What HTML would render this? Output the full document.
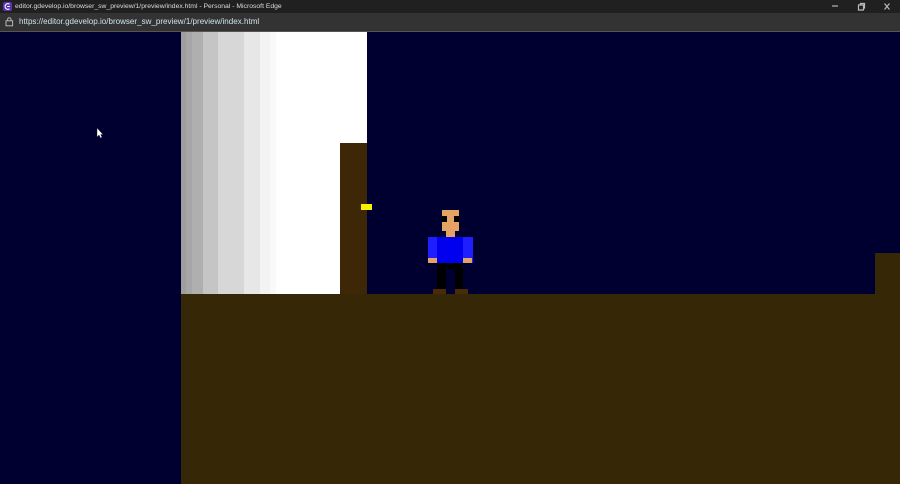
<!DOCTYPE html>
<html lang="en">
<head>
<meta charset="utf-8">
<title>Preview</title>
<style>
html,body{margin:0;padding:0;width:900px;height:484px;overflow:hidden;background:#000030;font-family:"Liberation Sans",sans-serif}
div{position:absolute}
.t{white-space:nowrap;line-height:12px}
</style>
</head>
<body>
<div style="left:0;top:0;width:900px;height:484px;background:#000030;overflow:hidden">

<!-- Title bar -->
<div style="left:0;top:0;width:900px;height:13px;background:#202020"></div>
<div style="left:3px;top:2px;width:9px;height:9px;background:#5a32b4;border-radius:2px"></div>
<svg style="position:absolute;left:3px;top:2px" width="9" height="9" viewBox="0 0 9 9"><path d="M6.5 2.2A2.8 2.8 0 1 0 6.5 6.8M6.8 4.5H4.2" fill="none" stroke="#fff" stroke-width="1.1"/></svg>
<div class="t" style="left:15px;top:1px;color:#dcdcdc;font-size:6.8px">editor.gdevelop.io/browser_sw_preview/1/preview/index.html - Personal - Microsoft Edge</div>
<svg style="position:absolute;left:830px;top:1px" width="66" height="11" viewBox="0 0 66 11" fill="none" stroke="#b8b8b8" stroke-width="1.2">
<path d="M2 5H8"/>
<path d="M28.5 4H33.5V9H28.5ZM30.5 4V2.5H34.5V7H33.5"/>
<path d="M54.5 2.5L59.5 8.5M59.5 2.5L54.5 8.5"/>
</svg>

<!-- Address bar -->
<div style="left:0;top:13px;width:900px;height:18px;background:#333333"></div>
<div style="left:0;top:31px;width:900px;height:1px;background:#555"></div>
<svg style="position:absolute;left:5px;top:17px" width="9" height="10" viewBox="0 0 9 10" fill="none" stroke="#b5b5b5"><rect x="1" y="3.8" width="6.6" height="5"/><path d="M2.6 3.8V2.4A1.7 1.7 0 0 1 6 2.4V3.8"/></svg>
<div class="t" style="left:19px;top:16px;color:#cfe3ee;font-size:8.05px">https://editor.gdevelop.io/browser_sw_preview/1/preview/index.html</div>

<!-- Wall gradient -->
<div style="left:181px;top:32px;width:186px;height:262px;background:#fff"></div>
<div style="left:181px;top:32px;width:5px;height:262px;background:#9e9e9e"></div>
<div style="left:186px;top:32px;width:6px;height:262px;background:#a6a6a6"></div>
<div style="left:192px;top:32px;width:11px;height:262px;background:#afafaf"></div>
<div style="left:203px;top:32px;width:15px;height:262px;background:#c5c5c5"></div>
<div style="left:218px;top:32px;width:26px;height:262px;background:#d7d7d7"></div>
<div style="left:244px;top:32px;width:16px;height:262px;background:#e7e7e7"></div>
<div style="left:260px;top:32px;width:10px;height:262px;background:#f3f3f3"></div>
<div style="left:270px;top:32px;width:6px;height:262px;background:#f9f9f9"></div>

<!-- Ground and platforms -->
<div style="left:181px;top:294px;width:719px;height:190px;background:#362706"></div>
<div style="left:340px;top:143px;width:27px;height:151px;background:#3d2706"></div>
<div style="left:875px;top:253px;width:25px;height:41px;background:#362706"></div>
<div style="left:361px;top:204px;width:11px;height:6px;background:#f4f000"></div>

<!-- Character -->
<div style="left:442px;top:210px;width:17px;height:21px;background:#e5a265"></div>
<div style="left:442px;top:216px;width:5px;height:6px;background:#000"></div>
<div style="left:454px;top:216px;width:5px;height:6px;background:#000"></div>
<div style="left:446px;top:231px;width:9px;height:6px;background:#e5a265"></div>
<div style="left:428px;top:237px;width:45px;height:26px;background:#1e1eff"></div>
<div style="left:437px;top:237px;width:26px;height:26px;background:#0000ee"></div>
<div style="left:428px;top:258px;width:9px;height:5px;background:#e5a265"></div>
<div style="left:463px;top:258px;width:9px;height:5px;background:#e5a265"></div>
<div style="left:437px;top:263px;width:26px;height:6px;background:#000"></div>
<div style="left:437px;top:269px;width:9px;height:20px;background:#000"></div>
<div style="left:455px;top:269px;width:8px;height:20px;background:#000"></div>
<div style="left:433px;top:289px;width:13px;height:5px;background:#4a2a08"></div>
<div style="left:455px;top:289px;width:13px;height:5px;background:#4a2a08"></div>

<!-- Cursor -->
<svg style="position:absolute;left:96px;top:127px" width="8" height="12" viewBox="0 0 8 12"><path d="M1 1V10L3 8L4.5 11L6 10.3L4.6 7.5H7Z" fill="#fff" stroke="#222" stroke-width=".4"/></svg>
</div>
</body>
</html>
